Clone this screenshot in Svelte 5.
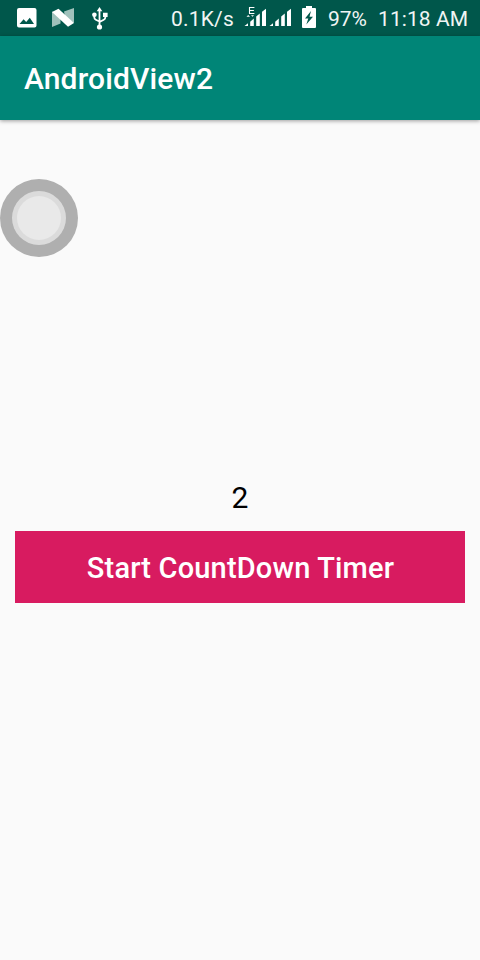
<script>
  let remaining = $state(2);
  let timer;

  function start() {
    clearInterval(timer);
    remaining = 10;
    timer = setInterval(() => {
      remaining -= 1;
      if (remaining <= 0) clearInterval(timer);
    }, 1000);
  }
</script>

<div class="screen">
  <header class="status">
    <div class="notifications">
      <svg width="20" height="20" viewBox="0 0 20 20">
        <path fill="#fff" fill-rule="evenodd" d="M2 0H17.5Q19.5 0 19.5 2V17.5Q19.5 19.5 17.5 19.5H2Q0 19.5 0 17.5V2Q0 0 2 0ZM2.5 16H17L12.8 9.7L9.2 14L6.6 11.3Z" />
      </svg>
      <svg class="nougat" width="22" height="19" viewBox="0 0 22 19">
        <path fill="#9fc1bb" d="M0 3.5L8.5 8V15.5L0 19ZM12 3.5L22 0V15L13 9Z" />
        <path fill="#fff" d="M0 4L6.5 .8L22 15L16 18.8Z" />
      </svg>
      <svg class="usb" width="16" height="23" viewBox="0 0 16 23">
        <g fill="none" stroke="#fff" stroke-width="1.8">
          <path d="M7.5 3V20M2.3 8V10.5Q2.3 12 3.8 12.7L7.5 14.5M13.3 8V10.5Q13.3 12 11.8 12.7L7.5 15" />
        </g>
        <path fill="#fff" d="M7.5 0L10.3 4.3H4.7ZM11 5.7H15.6V10H11Z" />
        <circle fill="#fff" cx="2.4" cy="7.8" r="2.3" />
        <circle fill="#fff" cx="7.5" cy="20" r="2.6" />
      </svg>
    </div>
    <div class="system">
      <span class="rate">0.1K/s</span>
      <svg class="signal" width="48" height="20" viewBox="0 0 48 20">
        <path fill="#fff" d="M.5 19L4 16.3V19ZM6.2 14.7L9.8 11.6V19H6.2ZM12.2 9.4L15.8 6.4V19H12.2ZM18 4.8L22 1.8V19H18ZM25.5 19L29 16.3V19ZM31.2 14.7L34.8 11.6V19H31.2ZM37.2 9.4L40.8 6.4V19H37.2ZM43 4.8L47 1.8V19H43Z" />
        <path fill="#fff" d="M2.5 9.7L4.2 8L6 9.7ZM7 8.2H10L8.5 9.8Z" />
        <path fill="none" stroke="#fff" stroke-width="1.1" d="M10.4 .5H5.5V6.5H10.4M5.5 3.5H9.9" />
      </svg>
      <svg class="battery" width="14" height="22" viewBox="0 0 14 22">
        <path fill="#fff" fill-rule="evenodd" d="M4 0H10V2H13Q14 2 14 3V21Q14 22 13 22H1Q0 22 0 21V3Q0 2 1 2H4ZM9 5L3 12.5H6.3L4.3 18.5L11 10.7H7.5Z" />
      </svg>
      <span class="percent">97%</span>
      <span class="clock">11:18 AM</span>
    </div>
  </header>
  <div class="toolbar"><h1>AndroidView2</h1></div>
  <main>
    <div class="count">{remaining}</div>
    <button onclick={start}>Start CountDown Timer</button>
  </main>
  <div class="touch"><div class="ring"><div class="core"></div></div></div>
</div>

<style>
  :global(body) { margin: 0; }
  .screen {
    position: relative;
    display: flex;
    flex-direction: column;
    width: 480px;
    height: 960px;
    overflow: hidden;
    background: #fafafa;
    font-family: Roboto, sans-serif;
  }
  svg { display: block; flex: none; }
  .status {
    display: flex;
    justify-content: space-between;
    height: 36px;
    flex: none;
    box-sizing: border-box;
    padding: 0 12px 0 17px;
    background: #00574b;
    color: #fff;
    font-size: 21px;
    line-height: 39px;
    white-space: nowrap;
  }
  .notifications, .system { display: flex; align-items: flex-start; }
  .notifications svg { margin-top: 8px; }
  .notifications .nougat { margin-left: 15px; }
  .notifications .usb { margin: 7px 0 0 18px; }
  .rate, .percent, .clock { color: #f0f5f4; }
  .rate { width: 63px; letter-spacing: .2px; }
  .signal { margin: 7px 0 0 10px; }
  .battery { margin: 6px 0 0 10px; }
  .percent { width: 39px; margin-left: 12px; }
  .clock { width: 90px; margin-left: 11px; letter-spacing: .08px; }
  .toolbar {
    display: flex;
    align-items: center;
    height: 84px;
    flex: none;
    box-sizing: border-box;
    padding: 2px 0 0 24px;
    background: #008577;
    box-shadow: 0 1px 4px rgba(0, 0, 0, .38);
  }
  h1 { margin: 0; color: #fff; font-size: 30px; font-weight: 500; line-height: 36px; letter-spacing: .14px; }
  main { display: flex; flex-direction: column; padding: 358px 15px 0; }
  .count { height: 53px; text-align: center; color: #000; font-size: 30px; line-height: 40px; }
  button {
    height: 72px;
    border: 0;
    padding: 2px 0 0 1px;
    background: #d81b60;
    color: #fff;
    font: 500 29px Roboto, sans-serif;
    letter-spacing: .17px;
  }
  .touch, .ring { display: flex; align-items: center; justify-content: center; border-radius: 50%; }
  .touch { position: absolute; left: 0; top: 179px; width: 78px; height: 78px; background: #afafaf; }
  .ring { width: 54px; height: 54px; background: #dbdbdb; }
  .core { width: 44px; height: 44px; border-radius: 50%; background: #e9e9e9; }
</style>
